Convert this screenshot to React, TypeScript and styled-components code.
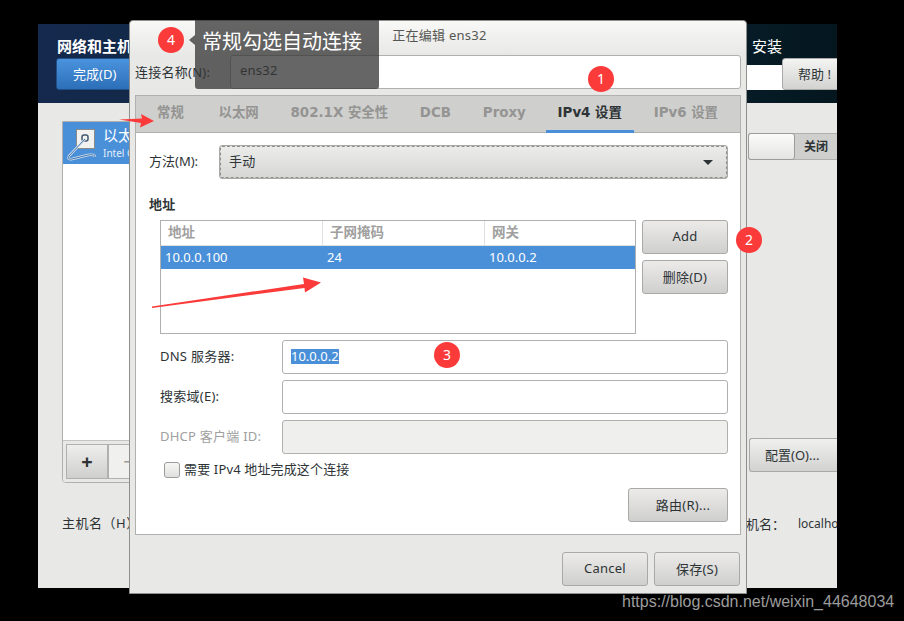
import * as React from "react"
import styled, { createGlobalStyle } from "styled-components"

const UI_FONT = `"Noto Sans", "Noto Sans CJK SC", sans-serif`

const Global = createGlobalStyle`
  html, body {
    margin: 0;
    padding: 0;
    background: #000;
    font-family: ${UI_FONT};
    font-size: 13px;
    color: #2e3436;
  }
`

const Page = styled.div`
  position: relative;
  width: 904px;
  height: 621px;
  overflow: hidden;
  background: #000;
  padding: 24px 0 0 38px;
  box-sizing: border-box;
`

/* installer window behind the dialog */
const BackWindow = styled.div`
  width: 799px;
  height: 564px;
  background: #e8e8e7;
  display: flex;
  flex-direction: column;
  overflow: hidden;
`

const Header = styled.header`
  height: 79px;
  flex: none;
  display: flex;
  justify-content: space-between;
  background: linear-gradient(90deg, #14294d 0%, #0f2a3f 50%, #04171f 100%);
`

const HeaderLeft = styled.div`
  padding: 12px 0 0 19px;
`

const SpokeTitle = styled.div`
  color: #fff;
  font-weight: bold;
  font-size: 15px;
  line-height: 20px;
`

const DoneButton = styled.button`
  display: block;
  width: 300px;
  height: 32px;
  margin: 2px 0 0 -1px;
  padding: 0 0 2px 0;
  text-align: left;
  text-indent: 16px;
  background: linear-gradient(#4b93de, #2c6fb8);
  border: 1px solid #20508a;
  border-radius: 3px;
  color: #fff;
  font: 13px ${UI_FONT};
`

const HeaderRight = styled.div`
  width: 90px;
  padding-top: 12px;
  box-sizing: border-box;
`

const Install = styled.div`
  color: #fff;
  font-size: 15px;
  line-height: 20px;
  padding-left: 5px;
`

const HelpRow = styled.div`
  display: flex;
  height: 32px;
  margin-top: 2px;
  padding-left: 35px;
  background: linear-gradient(transparent 7px, #fff 7px);
`

const HelpButton = styled.button`
  width: 60px;
  flex: none;
  text-align: left;
  padding: 0 0 2px 15px;
  background: linear-gradient(#f4f4f3, #d2d2d0);
  border: 1px solid #a9a9a7;
  border-radius: 3px 0 0 3px;
  color: #2e3436;
  font: 13px ${UI_FONT};
  white-space: nowrap;
`

const Body = styled.div`
  flex: 1;
  display: flex;
  justify-content: space-between;
`

const LeftPane = styled.div`
  width: 420px;
  padding: 18px 0 0 24px;
`

const DeviceList = styled.div`
  height: 362px;
  box-sizing: border-box;
  border: 1px solid #b0b0ae;
  border-radius: 0 0 4px 4px;
  background: #fff;
  display: flex;
  flex-direction: column;
`

const DeviceItem = styled.div`
  height: 42px;
  flex: none;
  display: flex;
  gap: 5px;
  padding-left: 3px;
  background: #4a90d9;
  color: #fff;
`

const DeviceIcon = styled.svg`
  width: 32px;
  height: 36px;
  margin-top: 5px;
  flex: none;
`

const DeviceText = styled.div`
  padding-top: 2px;
`

const DeviceName = styled.div`
  font-size: 15px;
  line-height: 22px;
`

const DeviceSub = styled.div`
  font-size: 10px;
  line-height: 14px;
  opacity: 0.85;
`

const DeviceSpacer = styled.div`
  flex: 1;
`

const ListToolbar = styled.div`
  height: 42px;
  flex: none;
  box-sizing: border-box;
  padding: 3px;
  display: flex;
  background: #e8e8e7;
  border-top: 1px solid #c4c4c2;
  border-radius: 0 0 4px 4px;
`

interface ToolButtonProps {
  disabled?: boolean
}
const ToolButton = styled.div<ToolButtonProps>`
  width: 42px;
  height: 35px;
  box-sizing: border-box;
  display: flex;
  align-items: center;
  justify-content: center;
  font-size: 20px;
  font-weight: ${(p) => (p.disabled ? "normal" : "bold")};
  color: ${(p) => (p.disabled ? "#9a9a98" : "#2e3436")};
  background: ${(p) => (p.disabled ? "#f0f0ef" : "linear-gradient(#eeeeed, #cfcfcd)")};
  border: 1px solid #b0b0ae;
`

const Hostname = styled.div`
  margin-top: 31px;
  line-height: 18px;
  letter-spacing: 0.5px;
`

const RightPane = styled.div`
  width: 89px;
  display: flex;
  flex-direction: column;
  padding-top: 30px;
  box-sizing: border-box;
`

const Switch = styled.div`
  height: 27px;
  width: 100%;
  display: flex;
  background: #cfcfcd;
  border: 1px solid #b0b0ae;
  border-right: 0;
  border-radius: 3px 0 0 3px;
  box-sizing: border-box;
`

const SwitchKnob = styled.div`
  width: 45px;
  margin: -1px 0 -1px -1px;
  background: linear-gradient(#fbfbfa, #e4e4e3);
  border: 1px solid #9c9c9a;
  border-radius: 3px;
`

const SwitchLabel = styled.div`
  flex: 1;
  text-align: center;
  font-size: 12px;
  font-weight: bold;
  line-height: 25px;
`

const ConfigButton = styled.button`
  margin: 278px 0 0 1px;
  height: 34px;
  text-align: left;
  padding: 0 0 2px 15px;
  background: linear-gradient(#f0f0ef, #d2d2d0);
  border: 1px solid #a9a9a7;
  border-right: 0;
  border-radius: 3px 0 0 3px;
  color: #2e3436;
  font: 13px ${UI_FONT};
  white-space: nowrap;
`

const HostValue = styled.div`
  margin: 43px 0 0 -2px;
  display: flex;
  line-height: 18px;
  white-space: nowrap;
  overflow: hidden;
`

const HostKey = styled.span`
  width: 52px;
  flex: none;
`

const HostText = styled.span`
  font-size: 12px;
`

/* edit connection dialog */
const Dialog = styled.div`
  position: absolute;
  left: 129px;
  top: 20px;
  width: 618px;
  height: 574px;
  box-sizing: border-box;
  background: #e8e8e7;
  border: 1px solid #8f8f8d;
  border-radius: 4px 4px 0 0;
  display: flex;
  flex-direction: column;
  letter-spacing: 0.25px;
`

const TitleBar = styled.div`
  height: 34px;
  flex: none;
  padding: 5px 0 0 3px;
  box-sizing: border-box;
  text-align: center;
  font-size: 13px;
  line-height: 18px;
  color: #555753;
  background: linear-gradient(#f8f8f7, #e8e8e7);
  border-radius: 4px 4px 0 0;
`

const NameRow = styled.div`
  display: flex;
  align-items: center;
  height: 34px;
  padding: 0 5px 0 5px;
  flex: none;
`

const NameLabel = styled.label`
  width: 95px;
  flex: none;
  font-size: 13px;
  padding-bottom: 2px;
`

const Entry = styled.div`
  flex: 1;
  height: 34px;
  box-sizing: border-box;
  padding-left: 9px;
  line-height: 29px;
  background: #fff;
  border: 1px solid #b0b0ae;
  border-radius: 3px;
`

const Notebook = styled.div`
  margin: 6px 5px 0 5px;
  height: 440px;
  flex: none;
  box-sizing: border-box;
  border: 1px solid #b0b0ae;
  background: #fff;
  display: flex;
  flex-direction: column;
`

const TabBar = styled.div`
  height: 36px;
  flex: none;
  display: flex;
  gap: 7.8px;
  padding-left: 9px;
  background: #cfcfcd;
  border-bottom: 1px solid #b0b0ae;
`

interface TabProps {
  active?: boolean
}
const Tab = styled.div<TabProps>`
  padding: 0 12px;
  font-family: "DejaVu Sans", "Noto Sans CJK SC", sans-serif;
  font-weight: bold;
  font-size: 13.4px;
  letter-spacing: 0;
  line-height: 34px;
  height: 37px;
  box-sizing: border-box;
  white-space: nowrap;
  color: ${(p) => (p.active ? "#2e3436" : "#949492")};
  border-bottom: 3px solid ${(p) => (p.active ? "#4a90d9" : "transparent")};
  &:first-child {
    margin-right: 3px;
  }
`

const TabPage = styled.div`
  flex: 1;
  padding: 12px 12px 12px 13px;
  display: flex;
  flex-direction: column;
`

const MethodRow = styled.div`
  display: flex;
  align-items: center;
  height: 34px;
  flex: none;
`

const MethodLabel = styled.label`
  width: 70px;
  flex: none;
  padding-bottom: 3px;
  letter-spacing: 0;
`

const Combo = styled.div`
  flex: 1;
  height: 34px;
  box-sizing: border-box;
  display: flex;
  align-items: center;
  justify-content: space-between;
  padding: 0 14px 3px 9px;
  background: linear-gradient(#ececeb, #d6d6d4);
  border: 1px solid #a9a9a7;
  outline: 1px dashed #8f8f8d;
  outline-offset: -2px;
  border-radius: 3px;
`

const ComboArrow = styled.span`
  width: 0;
  height: 0;
  margin-top: 3px;
  border-left: 5px solid transparent;
  border-right: 5px solid transparent;
  border-top: 5px solid #2e3436;
`

const SectionTitle = styled.div`
  margin-top: 15px;
  font-weight: bold;
  font-size: 13px;
  line-height: 20px;
`

const AddressArea = styled.div`
  display: flex;
  gap: 6px;
  margin: 6px 0 0 11px;
  height: 114px;
  flex: none;
`

const AddressTable = styled.div`
  flex: 1;
  box-sizing: border-box;
  border: 1px solid #b0b0ae;
  background: #fff;
`

const TableRow = styled.div`
  display: grid;
  grid-template-columns: 161px 162px 1fr;
`

const HeadCell = styled.div`
  height: 25px;
  box-sizing: border-box;
  padding-left: 7px;
  line-height: 22px;
  font-size: 13.5px;
  font-weight: bold;
  letter-spacing: 0;
  color: #a0a09e;
  border-bottom: 1px solid #e0e0df;
  & + & {
    border-left: 1px solid #e0e0df;
  }
`

const DataCell = styled.div`
  height: 23px;
  padding-left: 4px;
  line-height: 23px;
  letter-spacing: 0;
  color: #fff;
  background: #4a90d9;
  & + & {
    padding-left: 5px;
  }
`

const SideButtons = styled.div`
  width: 86px;
  flex: none;
  display: flex;
  flex-direction: column;
  gap: 6px;
`

interface PushButtonProps {
  width?: number
  indent?: number
}
const PushButton = styled.button<PushButtonProps>`
  width: ${(p) => (p.width ? `${p.width}px` : "100%")};
  height: 34px;
  flex: none;
  padding: 0 0 2px ${(p) => p.indent || 0}px;
  background: linear-gradient(#ecebea, #cfcfcd);
  border: 1px solid #a9a9a7;
  border-radius: 3px;
  color: #2e3436;
  font: 13px ${UI_FONT};
  letter-spacing: 0.25px;
`

const FormGrid = styled.div`
  display: grid;
  grid-template-columns: 122px 1fr;
  row-gap: 6px;
  margin: 6px 0 0 11px;
  align-items: center;
`

interface FieldLabelProps {
  disabled?: boolean
}
const FieldLabel = styled.label<FieldLabelProps>`
  padding-bottom: 4px;
  color: ${(p) => (p.disabled ? "#a0a09e" : "#2e3436")};
`

interface FieldProps {
  disabled?: boolean
}
const Field = styled.div<FieldProps>`
  height: 34px;
  box-sizing: border-box;
  padding-left: 8px;
  line-height: 30px;
  letter-spacing: 0;
  background: ${(p) => (p.disabled ? "#efefee" : "#fff")};
  border: 1px solid #b0b0ae;
  border-radius: 3px;
`

const Selected = styled.span`
  display: inline-block;
  line-height: 15px;
  color: #fff;
  background: #4a90d9;
`

const CheckRow = styled.div`
  display: flex;
  align-items: center;
  gap: 4px;
  margin: 7px 0 0 15px;
  height: 18px;
  line-height: 16px;
`

const CheckBox = styled.span`
  width: 16px;
  height: 16px;
  box-sizing: border-box;
  background: linear-gradient(#f6f6f5, #e0e0df);
  border: 1px solid #9c9c9a;
  border-radius: 3px;
`

const CheckText = styled.span`
  padding-bottom: 2px;
  letter-spacing: 0.15px;
`

const RouteRow = styled.div`
  display: flex;
  justify-content: flex-end;
  margin-top: 9px;
`

const DialogActions = styled.div`
  display: flex;
  justify-content: flex-end;
  gap: 6px;
  padding: 17px 6px 0 0;
`

/* annotations pasted on top of the screenshot */
const Hint = styled.div`
  position: absolute;
  left: 195px;
  top: 20px;
  width: 184px;
  height: 69px;
  box-sizing: border-box;
  padding: 7px 0 0 7px;
  font-family: "Noto Sans CJK SC", sans-serif;
  font-size: 20px;
  line-height: 27px;
  color: #fff;
  background: rgba(51, 51, 51, 0.75);
  border-radius: 0 0 3px 3px;
  &::before {
    content: "";
    position: absolute;
    left: -6px;
    top: 15px;
    border-top: 5px solid transparent;
    border-bottom: 5px solid transparent;
    border-right: 6px solid rgba(51, 51, 51, 0.75);
  }
`

interface BadgeProps {
  x: number
  y: number
}
const Badge = styled.div<BadgeProps>`
  position: absolute;
  left: ${(p) => p.x - 13}px;
  top: ${(p) => p.y - 13}px;
  width: 26px;
  height: 26px;
  border-radius: 50%;
  background: #fb3a3a;
  color: #fff;
  font-size: 14px;
  line-height: 25px;
  text-align: center;
`

const ArrowLayer = styled.svg`
  position: absolute;
  left: 0;
  top: 0;
  width: 904px;
  height: 621px;
  pointer-events: none;
`

const Watermark = styled.div`
  position: absolute;
  left: 622px;
  top: 592px;
  font-family: "Liberation Sans", sans-serif;
  font-size: 16px;
  line-height: 19px;
  white-space: nowrap;
  color: #9c9c9c;
`

const tabs = ["常规", "以太网", "802.1X 安全性", "DCB", "Proxy", "IPv4 设置", "IPv6 设置"]

const App: React.FunctionComponent = () => {
  return (
    <Page>
      <Global />
      <BackWindow>
        <Header>
          <HeaderLeft>
            <SpokeTitle>网络和主机名</SpokeTitle>
            <DoneButton>完成(D)</DoneButton>
          </HeaderLeft>
          <HeaderRight>
            <Install>安装</Install>
            <HelpRow>
              <HelpButton>帮助 !</HelpButton>
            </HelpRow>
          </HeaderRight>
        </Header>
        <Body>
          <LeftPane>
            <DeviceList>
              <DeviceItem>
                <DeviceIcon viewBox="0 0 32 36">
                  <rect x="10.5" y="2.5" width="18" height="19" fill="#f2f2f0" stroke="#8a8a88" />
                  <rect x="16" y="8" width="6" height="6" rx="2" fill="none" stroke="#44586e" strokeWidth="1.5" />
                  <path
                    d="M19 12 L3 29 Q1 33 6 32 Q14 30 22 28 Q29 27 29 30"
                    fill="none"
                    stroke="#dbe6f2"
                    strokeWidth="2.4"
                  />
                  <path d="M19 12 L3 29 Q1 33 6 32 Q14 30 22 28 Q29 27 29 30" fill="none" stroke="#3d6ea6" strokeWidth="1" />
                </DeviceIcon>
                <DeviceText>
                  <DeviceName>以太网 (ens32)</DeviceName>
                  <DeviceSub>Intel Corporation 82545EM</DeviceSub>
                </DeviceText>
              </DeviceItem>
              <DeviceSpacer />
              <ListToolbar>
                <ToolButton>+</ToolButton>
                <ToolButton disabled>−</ToolButton>
              </ListToolbar>
            </DeviceList>
            <Hostname>主机名（H）</Hostname>
          </LeftPane>
          <RightPane>
            <Switch>
              <SwitchKnob />
              <SwitchLabel>关闭</SwitchLabel>
            </Switch>
            <ConfigButton>配置(O)...</ConfigButton>
            <HostValue>
              <HostKey>机名：</HostKey>
              <HostText>localhost</HostText>
            </HostValue>
          </RightPane>
        </Body>
      </BackWindow>

      <Dialog>
        <TitleBar>正在编辑 ens32</TitleBar>
        <NameRow>
          <NameLabel>连接名称(N):</NameLabel>
          <Entry>ens32</Entry>
        </NameRow>
        <Notebook>
          <TabBar>
            {tabs.map((t) => (
              <Tab key={t} active={t === "IPv4 设置"}>
                {t}
              </Tab>
            ))}
          </TabBar>
          <TabPage>
            <MethodRow>
              <MethodLabel>方法(M):</MethodLabel>
              <Combo>
                手动
                <ComboArrow />
              </Combo>
            </MethodRow>
            <SectionTitle>地址</SectionTitle>
            <AddressArea>
              <AddressTable>
                <TableRow>
                  <HeadCell>地址</HeadCell>
                  <HeadCell>子网掩码</HeadCell>
                  <HeadCell>网关</HeadCell>
                </TableRow>
                <TableRow>
                  <DataCell>10.0.0.100</DataCell>
                  <DataCell>24</DataCell>
                  <DataCell>10.0.0.2</DataCell>
                </TableRow>
              </AddressTable>
              <SideButtons>
                <PushButton>Add</PushButton>
                <PushButton>删除(D)</PushButton>
              </SideButtons>
            </AddressArea>
            <FormGrid>
              <FieldLabel>DNS 服务器:</FieldLabel>
              <Field>
                <Selected>10.0.0.2</Selected>
              </Field>
              <FieldLabel>搜索域(E):</FieldLabel>
              <Field />
              <FieldLabel disabled>DHCP 客户端 ID:</FieldLabel>
              <Field disabled />
            </FormGrid>
            <CheckRow>
              <CheckBox />
              <CheckText>需要 IPv4 地址完成这个连接</CheckText>
            </CheckRow>
            <RouteRow>
              <PushButton width={100} indent={10}>路由(R)...</PushButton>
            </RouteRow>
          </TabPage>
        </Notebook>
        <DialogActions>
          <PushButton width={86}>Cancel</PushButton>
          <PushButton width={86}>保存(S)</PushButton>
        </DialogActions>
      </Dialog>

      <Hint>常规勾选自动连接</Hint>
      <Badge x={171} y={40}>4</Badge>
      <Badge x={601} y={79}>1</Badge>
      <Badge x={749} y={240}>2</Badge>
      <Badge x={447} y={355}>3</Badge>
      <ArrowLayer viewBox="0 0 904 621">
        <polygon points="119,119.5 142,118.5 141,114 154,121 140,127.5 141,123" fill="#fb3a3a" />
        <polygon points="152,306.5 304,284 303,277.5 321,282.5 305,292.5 304.5,288 152,308" fill="#fb3a3a" />
      </ArrowLayer>
      <Watermark>https://blog.csdn.net/weixin_44648034</Watermark>
    </Page>
  )
}

export default App
